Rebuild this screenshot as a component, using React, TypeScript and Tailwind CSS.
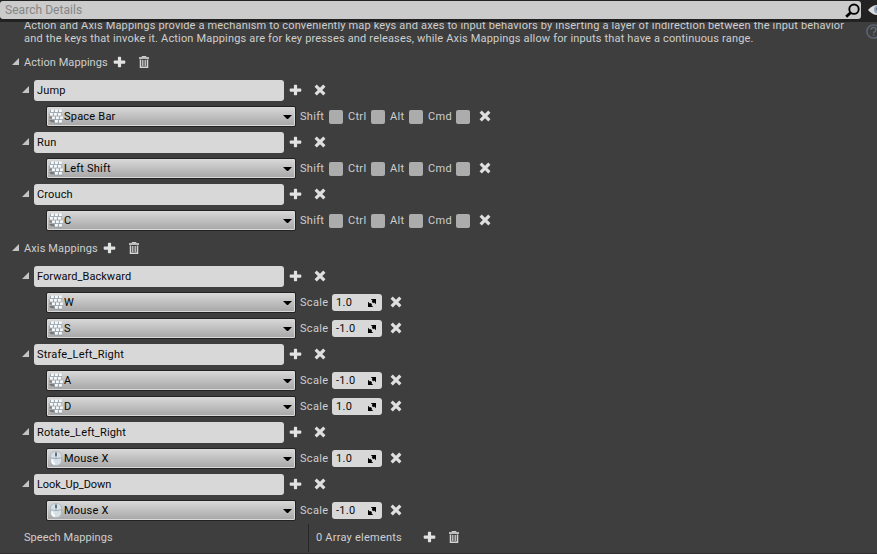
import React from 'react';

type Device = 'keyboard' | 'mouse';

const Plus = () => (
  <svg className="block h-[10px] w-[11px] shrink-0 overflow-visible" viewBox="0 0 11 10" fill="#e2e2e2">
    <path d="M4.500-.3h2l.6.6v3.100h3.600l.6.5v2.200l-.6.6H7.100v3.100l-.6.5h-2l-.6-.5V6.700H.3l-.6-.6V3.900l.6-.5h3.600V.3z" />
  </svg>
);

const Cross = () => (
  <svg className="block h-[10px] w-[10px] shrink-0 overflow-visible" viewBox="0 0 10 10" fill="none">
    <path d="M1.800 1.800l6.400 6.400M8.200 1.800l-6.400 6.400" stroke="#dfdfdf" strokeWidth="3.200" strokeLinecap="square" />
  </svg>
);

const Trash = () => (
  <svg className="block h-[12px] w-[10px] shrink-0" viewBox="0 0 10 12" fill="none">
    <path d="M3 1V.5h4V1" stroke="#cfcfcf" />
    <path d="M0 2h10" stroke="#dcdcdc" strokeWidth="1.600" />
    <path d="M1.500 3.600v7.700h7V3.600" stroke="#d6d6d6" strokeWidth="1.500" />
    <path d="M3.500 4v6M5 4v6M6.500 4v6" stroke="#d8d8d8" strokeWidth=".8" />
  </svg>
);

const Arrow = () => (
  <svg className="-mt-px mr-px block h-[7px] w-[7px] shrink-0" viewBox="0 0 7 7">
    <path d="M7 0v7H0z" fill="#c4c4c4" />
  </svg>
);

const KEYS = [
  [2, 0.5], [6, 0.5], [10, 0.5],
  [1, 4], [5, 4], [9, 4],
  [3, 7.5], [7, 7.5], [11, 7.5],
  [6, 11], [10, 11],
];

const DeviceIcon = ({ device }: { device: Device }) =>
  device === 'keyboard' ? (
    <svg className="mt-px block h-[15px] w-[15px] shrink-0" viewBox="0 0 15 15">
      <path d="M0 11h4.500l1.500 2.200H2zM1 7.500h2v2H0z" fill="#777777" />
      {KEYS.map(([x, y]) => (
        <g key={`${x}-${y}`}>
          <rect x={x - 0.7} y={y + 0.6} width="3.8" height="3" fill="#8f9ca5" />
          <rect x={x} y={y} width="2.9" height="2.7" fill="#f5f9fb" />
        </g>
      ))}
    </svg>
  ) : (
    <svg className="mt-px block h-[15px] w-[15px] shrink-0" viewBox="0 0 15 15">
      <path d="M1.500 5.500Q1.500.5 7 .5t5.500 5V9.500q0 5-5.500 5t-5.500-5z" fill="#d5e0e7" stroke="#a5b1b9" strokeWidth=".7" />
      <path d="M1.800 6.800q5.200 1.700 10.400 0M7 .8v6.500" stroke="#8a979f" strokeWidth=".7" fill="none" />
      <rect x="6.100" y="1.600" width="1.800" height="3.800" rx=".8" fill="#5b666e" />
      <path d="M3.400 8.600v1.500q0 2.700 2.600 3" stroke="#fff" strokeWidth="2" fill="none" />
    </svg>
  );

const Header = ({ title, width, tracking }: { title: string; width: string; tracking: string }) => (
  <div className="flex h-[30px] items-center pl-[12px]">
    <Arrow />
    <span className={`ml-[4px] ${tracking} ${width}`}>{title}</span>
    <Plus />
    <span className="ml-[14px]"><Trash /></span>
  </div>
);

const NameRow = ({ name, tracking = 'tracking-[0.15px]' }: { name: string; tracking?: string }) => (
  <div className="flex h-[26px] items-center pl-[22px]">
    <Arrow />
    <div className={`ml-[4px] flex h-[21px] w-[250px] items-center rounded-[3px] bg-[#d8d8d8] pl-[3px] text-[#080808] ${tracking}`}>{name}</div>
    <span className="ml-[6px]"><Plus /></span>
    <span className="ml-[14px]"><Cross /></span>
  </div>
);

const Combo = ({ device, value }: { device: Device; value: string }) => (
  <div className="flex h-[21px] w-[250px] shrink-0 items-center rounded-[2px] border border-[#222222] bg-linear-to-b from-[#d9d9d9] to-[#a6a6a6] pl-[2px] text-[#050505] shadow-[inset_0_0_0_1px_#d9d9d9]">
    <DeviceIcon device={device} />
    <span className="flex-1 tracking-[0.22px]">{value}</span>
    <svg className="mt-[2px] mr-[3px] block h-[4px] w-[9px]" viewBox="0 0 9 4"><path d="M0 0h9L4.500 4.500z" fill="#000" /></svg>
  </div>
);

const Check = ({ label, width }: { label: string; width: string }) => (
  <>
    <span className={width}>{label}</span>
    <span className="mt-[1px] mr-[5px] h-[14px] w-[14px] rounded-[2px] bg-[#acacac]" />
  </>
);

const ActionKey = ({ value }: { value: string }) => (
  <div className="flex h-[26px] items-center pl-[46px]">
    <Combo device="keyboard" value={value} />
    <span className="w-[4px]" />
    <Check label="Shift" width="w-[29px]" />
    <Check label="Ctrl" width="w-[23px]" />
    <Check label="Alt" width="w-[19px]" />
    <Check label="Cmd" width="w-[28px]" />
    <span className="ml-[5px]"><Cross /></span>
  </div>
);

const AxisKey = ({ device = 'keyboard', value, scale }: { device?: Device; value: string; scale: string }) => (
  <div className="flex h-[26px] items-center pl-[46px]">
    <Combo device={device} value={value} />
    <span className="ml-[4px] w-[32px]">Scale</span>
    <div className="flex h-[17px] w-[50px] items-center rounded-[3px] bg-[#d8d8d8] pr-[6px] pl-[4px] text-[#0a0a0a]">
      <span className="flex-1">{scale}</span>
      <svg className="mt-[1px] block h-[8px] w-[8px]" viewBox="0 0 8 8">
        <path d="M2.800 0H8v5.200L6.200 3.500 5.200 4.200 3.800 2.800 4.500 1.800zM0 2.800V8h5.200L3.500 6.200 4 5.200 2.600 4 1.800 4.500z" fill="#000" />
      </svg>
    </div>
    <span className="ml-[9px]"><Cross /></span>
  </div>
);

export default function App() {
  return (
    <div className="relative flex h-[554px] w-[877px] flex-col overflow-hidden bg-[#3e3e3e] font-['Roboto',sans-serif] text-[11px] leading-[13px] tracking-[0.3px] whitespace-nowrap text-[#cfcfcf]">
      <div className="z-10 flex h-[22px] shrink-0 items-start bg-[#222222] pt-px">
        <div className="flex h-[18px] w-[861px] shrink-0 items-center rounded-[3px] bg-[#cbcbcb] pl-[5px] text-[12px] tracking-[0.05px] text-[#868686]">
          <span className="flex-1">Search Details</span>
          <svg className="mr-[1px] block h-[15px] w-[15px]" viewBox="0 0 15 15" fill="none" stroke="#000">
            <circle cx="9" cy="6.200" r="4.700" strokeWidth="1.900" />
            <path d="M5.500 9.700L1.200 13.800" strokeWidth="2.800" />
          </svg>
        </div>
        <svg className="mt-[3px] ml-[7px] block h-[12px] w-[18px] shrink-0" viewBox="0 0 18 12">
          <path d="M0 6q9-10 18 0-9 10-18 0z" fill="#dcdcdc" />
          <circle cx="10" cy="5.500" r="4" fill="#8ba1bd" />
          <circle cx="10.500" cy="5" r="2" fill="#20272f" />
        </svg>
      </div>
      <div className="flex h-[25px] shrink-0 pl-[24px]">
        <div className="-mt-[3px] w-[842px] shrink-0 tracking-[0.166px]">
          <p>Action and Axis Mappings provide a mechanism to conveniently map keys and axes to input behaviors by inserting a layer of indirection between the input behavior</p>
          <p>and the keys that invoke it. Action Mappings are for key presses and releases, while Axis Mappings allow for inputs that have a continuous range.</p>
        </div>
        <svg className="mt-[2px] block h-[15px] w-[15px] shrink-0" viewBox="0 0 15 15" fill="none" stroke="#5f6a79">
          <circle cx="7.500" cy="7.500" r="6.600" strokeWidth="1.400" />
          <path d="M5 5.800q0-2.300 2.500-2.300T10 5.700q0 1.100-1.200 1.800-1.200.6-1.200 1.800M7.600 10.300v1.500" strokeWidth="1.500" />
        </svg>
      </div>
      <Header title="Action Mappings" width="w-[90px]" tracking="tracking-[0.06px]" />
      <NameRow name="Jump" />
      <ActionKey value="Space Bar" />
      <NameRow name="Run" />
      <ActionKey value="Left Shift" />
      <NameRow name="Crouch" />
      <ActionKey value="C" />
      <Header title="Axis Mappings" width="w-[80px]" tracking="tracking-[0.12px]" />
      <NameRow name="Forward_Backward" tracking="tracking-[0.05px]" />
      <AxisKey value="W" scale="1.0" />
      <AxisKey value="S" scale="-1.0" />
      <NameRow name="Strafe_Left_Right" tracking="tracking-[0.2px]" />
      <AxisKey value="A" scale="-1.0" />
      <AxisKey value="D" scale="1.0" />
      <NameRow name="Rotate_Left_Right" />
      <AxisKey device="mouse" value="Mouse X" scale="1.0" />
      <NameRow name="Look_Up_Down" tracking="tracking-[-0.08px]" />
      <AxisKey device="mouse" value="Mouse X" scale="-1.0" />
      <div className="mt-px flex h-[28px] items-center pl-[24px]">
        <span className="-mt-[2px] w-[284px] tracking-[0.08px]">Speech Mappings</span>
        <span className="h-[28px] w-px bg-[#262626]" />
        <span className="-mt-[2px] ml-[7px] w-[108px] tracking-[0.23px]">0 Array elements</span>
        <span className="-mt-[2px]"><Plus /></span>
        <span className="-mt-[2px] ml-[14px]"><Trash /></span>
      </div>
      <div className="mt-px h-px bg-[#302e2e]" />
    </div>
  );
}
